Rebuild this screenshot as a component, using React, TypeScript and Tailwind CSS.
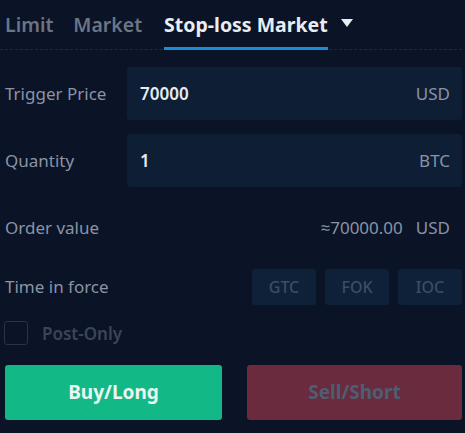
import React from 'react';

function Field({ label, value, unit }: { label: string; value: string; unit: string }) {
  return (
    <div className="flex items-center">
      <div className="w-[122px] text-[17px] text-[#8a94a6]">{label}</div>
      <div className="flex h-[53px] flex-1 items-center justify-between rounded-[3px] bg-[#0e1e35] pl-[13px] pr-[12px]">
        <span className="text-[17px] font-semibold text-[#e6ebf2]">{value}</span>
        <span className="text-[17px] text-[#8a94a6]">{unit}</span>
      </div>
    </div>
  );
}

export default function App() {
  return (
    <div
      className="h-[433px] w-[465px] overflow-hidden bg-[#0b1326] pr-[3px]"
      style={{ fontFamily: '"Noto Sans", "Open Sans", sans-serif' }}
    >
      {/* Tabs */}
      <div className="flex h-[50px] items-stretch border-b border-dashed border-[#1e2a3e] pl-[5px]">
        <div className="flex items-center text-[19.5px] font-semibold text-[#6b7585]">Limit</div>
        <div className="ml-[20px] flex items-center text-[19.5px] font-semibold text-[#6b7585]">Market</div>
        <div className="relative ml-[22px] flex items-center text-[19.5px] font-bold text-[#e8edf3]">
          Stop-loss Market
          <span className="absolute bottom-[-1px] left-0 right-0 h-[3px] bg-[#1a8cd8]" />
        </div>
        <div className="ml-[13px] flex items-center pb-[2px]">
          <svg width="12" height="9" viewBox="0 0 12 9">
            <path d="M0 0 H12 L6 8 Z" fill="#e8edf3" />
          </svg>
        </div>
      </div>

      <div className="flex flex-col pl-[5px]">
        <div className="mt-[17px] flex flex-col gap-[14px]">
          <Field label="Trigger Price" value="70000" unit="USD" />
          <Field label="Quantity" value="1" unit="BTC" />
        </div>

        <div className="mt-[28px] flex items-center justify-between pr-[12px] text-[17px] text-[#8a94a6]">
          <span>Order value</span>
          <span>
            ≈70000.00<span className="ml-[13px]">USD</span>
          </span>
        </div>

        <div className="mt-[28px] flex items-center justify-between">
          <span className="text-[17px] text-[#8a94a6]">Time in force</span>
          <div className="flex gap-[9px]">
            {['GTC', 'FOK', 'IOC'].map((t) => (
              <div
                key={t}
                className="flex h-[36px] w-[64px] items-center justify-center rounded-[3px] bg-[#0f2039] text-[16px] font-medium text-[#3c4d63]"
              >
                {t}
              </div>
            ))}
          </div>
        </div>

        <div className="mt-[16px] flex items-center">
          <div className="ml-[-1px] h-[24px] w-[24px] rounded-[3px] border border-[#2a3446]" />
          <span className="ml-[14px] text-[17px] font-semibold text-[#3b4557]">Post-Only</span>
        </div>

        <div className="mt-[19px] flex gap-[25px]">
          <button className="flex h-[55px] w-[217px] items-center justify-center rounded-[3px] bg-[#12b886] text-[19px] font-bold text-[#eaf6f1]">
            Buy/Long
          </button>
          <button className="flex h-[55px] flex-1 items-center justify-center rounded-[3px] bg-[#6a2b3e] text-[19px] font-bold text-[#4e5d72]">
            Sell/Short
          </button>
        </div>
      </div>
    </div>
  );
}
